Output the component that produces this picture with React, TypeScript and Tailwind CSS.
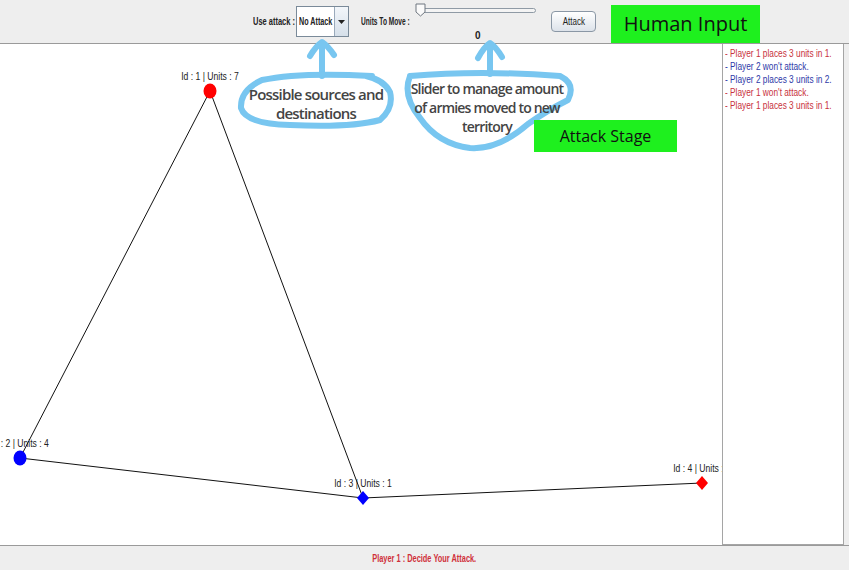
import React from 'react';

const sans = "font-['Liberation_Sans',Arial,sans-serif]";
const annot = "font-['Open_Sans','Noto_Sans',sans-serif]";

const nodes = [
  { id: 1, units: 7, x: 210, y: 91, color: '#ff0000', shape: 'circle' },
  { id: 2, units: 4, x: 20, y: 458, color: '#0000ff', shape: 'circle' },
  { id: 3, units: 1, x: 363, y: 498, color: '#0000ff', shape: 'diamond' },
  { id: 4, units: 3, x: 702, y: 483, color: '#ff0000', shape: 'diamond' },
];

const edges = [
  [1, 2],
  [1, 3],
  [2, 3],
  [3, 4],
];

const log = [
  { text: '- Player 1 places 3 units in 1.', color: 'text-[#c8323c]' },
  { text: "- Player 2 won't attack.", color: 'text-[#2e3aa8]' },
  { text: '- Player 2 places 3 units in 2.', color: 'text-[#2e3aa8]' },
  { text: "- Player 1 won't attack.", color: 'text-[#c8323c]' },
  { text: '- Player 1 places 3 units in 1.', color: 'text-[#c8323c]' },
];

const find = (id: number) => nodes.find((n) => n.id === id)!;

const MapCanvas = () => (
  <div className="relative w-[722px] h-full bg-white overflow-hidden">
    <svg width="722" height="501" className="absolute left-0 top-0" viewBox="0 44 722 501">
      {edges.map(([a, b], i) => {
        const p = find(a);
        const q = find(b);
        return <line key={i} x1={p.x} y1={p.y} x2={q.x} y2={q.y} stroke="#111" strokeWidth="1" />;
      })}
      {nodes.map((n) =>
        n.shape === 'circle' ? (
          <ellipse key={n.id} cx={n.x} cy={n.y} rx="6.5" ry="7.5" fill={n.color} />
        ) : (
          <polygon
            key={n.id}
            points={`${n.x},${n.y - 7} ${n.x + 6},${n.y} ${n.x},${n.y + 7} ${n.x - 6},${n.y}`}
            fill={n.color}
          />
        )
      )}
    </svg>
    {nodes.map((n) => (
      <div
        key={n.id}
        className="absolute -translate-x-1/2 whitespace-nowrap text-[10px] leading-none text-[#222]"
        style={{ left: n.x, top: n.y - 44 - 19 }}
      >
        <span className="inline-block scale-x-[0.86]">
          Id : {n.id} | Units : {n.units}
        </span>
      </div>
    ))}
  </div>
);

const Annotations = () => (
  <>
    <svg width="849" height="570" className="absolute left-0 top-0 pointer-events-none">
      <g fill="none" stroke="#78c6f0" strokeWidth="6" strokeLinecap="round" strokeLinejoin="round">
        <path d="M322 76 L322 46 M310 56 Q316 46 322 42 Q328 46 334 55" />
        <path d="M372 76 Q300 72 262 80 Q240 90 241 108 Q246 124 290 125 Q350 128 380 120 Q394 108 390 92 Q384 80 366 76" />
        <path d="M490 74 L490 48 M478 58 Q484 47 490 43 Q496 47 502 57" />
        <path d="M410 76 Q480 70 560 76 Q576 84 568 100 Q548 110 528 124 Q498 150 470 148 Q438 144 420 118 Q402 96 410 76" />
      </g>
    </svg>
    <div className={`absolute left-[240px] top-[85px] w-[152px] text-center text-[15px] leading-[19px] font-semibold tracking-[-0.8px] text-[#444] ${annot}`}>
      Possible sources and
      <br />
      destinations
    </div>
    <div className={`absolute left-[404px] top-[79px] w-[166px] text-center text-[14px] leading-[19px] font-semibold tracking-[-0.8px] text-[#444] ${annot}`}>
      Slider to manage amount
      <br />
      of armies moved to new
      <br />
      territory
    </div>
    <div className={`absolute left-[611px] top-[5px] w-[149px] h-[38px] bg-[#1ef01e] flex items-center justify-center text-[20px] text-[#111] ${annot}`}>
      Human Input
    </div>
    <div className={`absolute left-[534px] top-[120px] w-[143px] h-[32px] bg-[#1ef01e] flex items-center justify-center text-[16px] text-[#111] ${annot}`}>
      Attack Stage
    </div>
  </>
);

export default function App() {
  return (
    <div className={`relative w-[849px] h-[570px] bg-[#eeeeee] flex flex-col overflow-hidden ${sans}`}>
      {/* Controls */}
      <div className="h-[44px] shrink-0 border-b border-[#9a9a9a] flex items-center pl-[253px] text-[11px] font-bold text-[#222]">
        <span className="w-[41px] whitespace-nowrap">
          <span className="inline-block origin-left scale-x-[0.68]">Use attack :</span>
        </span>
        <div className="ml-[2px] w-[53px] h-[31px] flex border border-[#7a8a99] bg-white">
          <span className="flex-1 flex items-center pl-[2px] whitespace-nowrap overflow-hidden text-[10px]">
            <span className="inline-block origin-left scale-x-[0.72]">No Attack</span>
          </span>
          <span className="w-[14px] border-l border-[#9aaabb] bg-gradient-to-b from-[#f2f6fa] to-[#d6e0ea] flex items-center justify-center">
            <svg width="7" height="4" viewBox="0 0 7 4"><path d="M0 0h7L3.5 4z" fill="#222" /></svg>
          </span>
        </div>
        <span className="ml-[12px] w-[53px] whitespace-nowrap">
          <span className="inline-block origin-left scale-x-[0.6]">Units To Move :</span>
        </span>
        <div className="relative ml-[1px] w-[122px] h-[44px]">
          <div className="absolute left-[3px] top-[8px] w-[118px] h-[5px] border border-[#8f9aa5] rounded-sm bg-[#f4f4f4]" />
          <svg className="absolute left-0 top-[3px]" width="11" height="14" viewBox="0 0 11 14">
            <path d="M1 1h9v8l-4.5 4L1 9z" fill="#fafafa" stroke="#6f7780" />
          </svg>
          <span className="absolute left-[60px] top-[28px] text-[10px]">0</span>
        </div>
        <button className="ml-[14px] w-[45px] h-[21px] border border-[#8a97a5] rounded-sm bg-gradient-to-b from-white to-[#dde3ea] text-[10px] font-normal text-[#222] whitespace-nowrap">
          <span className="inline-block scale-x-[0.8]">Attack</span>
        </button>
      </div>

      {/* Board + log */}
      <div className="h-[501px] shrink-0 flex">
        <MapCanvas />
        <div className="w-[122px] h-full border border-[#a5a5a5] border-t-0 bg-white pt-[3px] pl-[2px] overflow-hidden">
          {log.map((l, i) => (
            <div key={i} className={`text-[10px] leading-[13px] whitespace-nowrap ${l.color}`}>
              <span className="inline-block origin-left scale-x-[0.83]">{l.text}</span>
            </div>
          ))}
        </div>
      </div>

      {/* Status */}
      <div className="flex-1 border-t border-[#9a9a9a] flex items-center justify-center text-[10px] font-bold text-[#d0303a] whitespace-nowrap">
        <span className="inline-block scale-x-[0.74]">Player 1 : Decide Your Attack.</span>
      </div>

      <Annotations />
    </div>
  );
}
